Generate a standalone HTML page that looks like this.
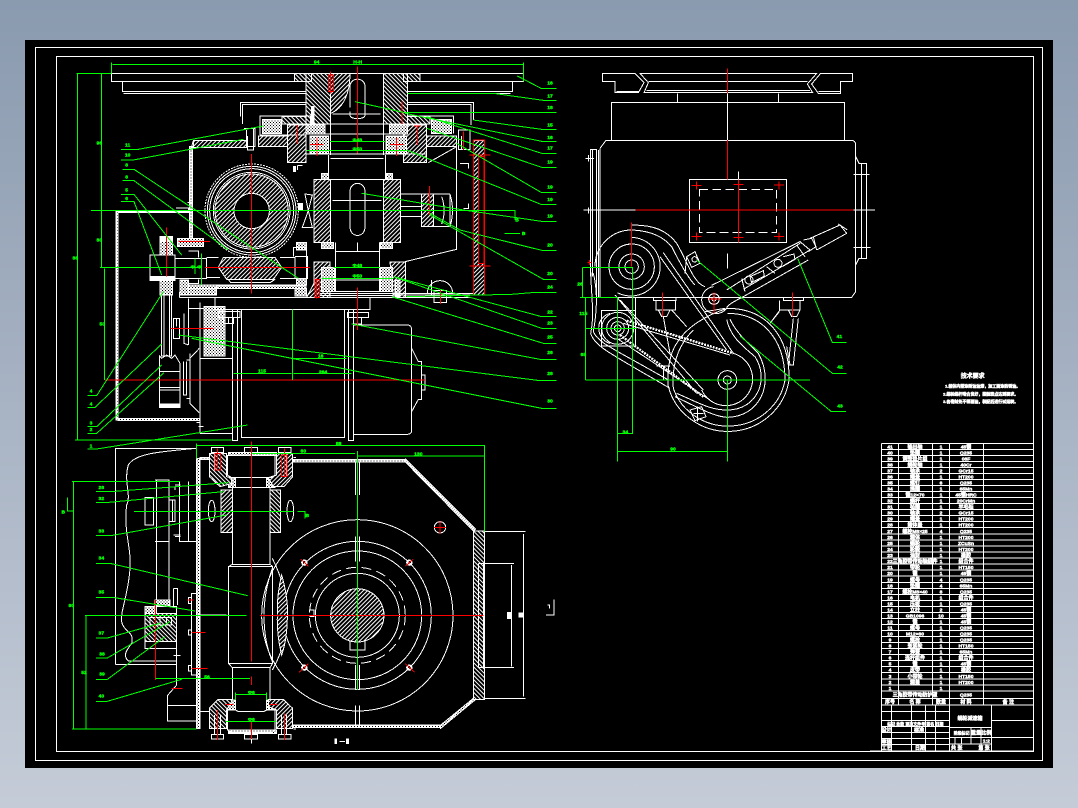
<!DOCTYPE html>
<html><head><meta charset="utf-8"><title>CAD drawing</title>
<style>
html,body{margin:0;padding:0;width:1078px;height:808px;overflow:hidden;background:linear-gradient(#8a9aaf,#c5ccd8)}
#k{position:absolute;left:25px;top:40px;width:1028px;height:728px;background:#000}
svg{position:absolute;left:0;top:0}
text{font-family:"Liberation Sans","Noto Sans CJK SC",sans-serif;font-weight:bold;stroke:none;text-anchor:middle}
.g text,text.g{fill:#0f0;stroke:#0f0;stroke-width:1.2px;font-size:15px}
.t text{fill:#fff;stroke:#fff;stroke-width:1.4px;font-size:15px}
</style></head><body><div id="k"></div>
<svg width="1078" height="808" viewBox="0 0 1078 808" fill="none" shape-rendering="crispEdges">
<defs>
<pattern id="h" width="9" height="9" patternUnits="userSpaceOnUse" patternTransform="rotate(45)"><rect width="9" height="9" fill="#000"/><rect width="9" height="3.4" fill="#fff"/></pattern>
<pattern id="b" width="9" height="9" patternUnits="userSpaceOnUse" patternTransform="rotate(-45)"><rect width="9" height="9" fill="#000"/><rect width="9" height="3.4" fill="#fff"/></pattern>
<pattern id="x" width="9" height="9" patternUnits="userSpaceOnUse"><rect width="9" height="9" fill="#fff"/><rect width="3" height="3" fill="#000"/><rect x="4.5" y="4.5" width="3" height="3" fill="#000"/></pattern>
</defs>
<path d="M35.5 47.5H1042.5V760.5H35.5Z M56.5 56.5H1033.5V751.5H56.5Z" stroke="#fff"/>

<!-- VIEW 1 -->
<g transform="translate(60 50) scale(.33333)" stroke-width="3">
<g stroke="#fff">
<path fill="url(#h)" d="M703 70H755V95H703Z M738 70H812V222H738Z M1030 70H1080V95H1030Z M970 70H1042V222H970Z M666 200H738V222H666Z M1042 200H1110V222H1042Z"/>
<path fill="url(#b)" d="M812 70H870C870 130 850 175 812 190Z M683 225H738V338H683Z M1042 225H1100V338H1030V225Z M595 258H683V290H595Z M1100 258H1190V290H1100Z M400 272H560V292H400Z M762 388H812V578H762Z M970 388H1022V578H970Z M1240 272H1274V735H1240Z M762 636H810V742H740L762 700Z M990 636H1037V742H1000Z"/>
<path fill="url(#x)" d="M608 208H665V250H608Z M1115 208H1175V250H1115Z M738 225H795V252H738Z M988 225H1042V252H988Z M750 258H805V312H750Z M978 258H1040V312H978Z M785 652H825V725H785Z M960 652H998V725H960Z M432 770H495V918H432Z M388 290H398V565H388Z M168 483H174V1110H168Z M174 483H385V488H174Z M174 1105H420V1112H174Z M300 560H338V615H300Z M300 690H338V735H300Z M352 565H430V590H352Z M360 690H385V735H360Z M710 578H740V600H710Z M710 685H740V705H710Z M385 705H470V735H385Z M470 706H738V716H470Z M705 716H740V738H705Z M785 578H820V596H785Z M960 578H998V596H960Z M785 370H805V388H785Z M978 370H998V388H978Z M1005 690H1020V740H1005Z"/>
<path d="M154 70H1391V95H1042M738 95H154V70M187 95V125H738M190 130H738M1357 95V125H1042M1042 130H1352"/>
<path d="M812 222V315M970 222V315M738 222H1042M795 252H988M738 312H1100M812 325H970M806 315V388H976V315M812 388V578M970 388V578M818 452H965"/>
<path d="M870 172V110C870 80 915 80 915 110V195C915 210 870 210 870 195V185M818 192H962" />
<path d="M870 530V425C870 392 915 392 915 425V530C915 565 870 565 870 530Z"/>
<path d="M542 200V157H738M1042 157H1240V210M548 222V163H738M1042 163H1233V225M600 255V198H752V222M1180 250V198H1042M600 255H740"/>
<path d="M392 300L400 272M388 565H398M1100 290H1190V598L1035 635M1190 290L1105 338M1100 290L1180 290"/>
<path d="M552 235H585V290H560V240M1195 240H1230V298H1195Z M580 235V300H562V258M1205 258V298"/>
<circle cx="575" cy="482" r="140" stroke-dasharray="6 3"/><circle cx="575" cy="482" r="133"/><circle cx="575" cy="482" r="126"/>
<path fill="url(#b)" fill-rule="evenodd" d="M575 372A110 110 0 1 1 574.9 372Z M575 430A53 53 0 1 0 575.1 430Z"/>
<circle cx="575" cy="482" r="115"/>
<path fill="url(#b)" d="M475 652L490 622H645L665 652L640 688H500Z"/>
<path d="M345 625H440V685H345M385 603H415V622M385 688V700H415V688M440 622H475M440 683H480M660 622H705V685H660M705 620H742V685H705M505 688L512 698H630L645 688"/>
<path d="M700 620V592H740V700"/>
<path d="M270 615H345V692H270ZM300 560H338V615M300 692V735H338V692M305 735V918H335V735M312 735V918M328 735V918"/>
<path d="M298 918L305 925 320 915 335 925 345 915 360 940V1072H298Z M298 965H360M298 1012H360M298 1020H360M370 935V1035H380V935M380 930H390V1045H380M390 910V1060L418 1088M390 925L418 895"/>
<path d="M340 805H358V865H340ZM350 805V830M372 790V880L385 885M385 745V885M385 775H432M420 758V1150M420 925H517M420 1150H517M465 742H930V778H465ZM358 742H1235M380 705H740M358 735H385M358 726V742M380 716H470"/>
<path d="M517 778V1172H533V778M545 778V1162H853V778M865 778V1172H880V778M475 785H540V802H475ZM490 802V820H520V802M505 802V820M862 788H925V803H862ZM880 803V822H905V803"/>
<path d="M880 825H1042Q1055 825 1055 840V1140Q1055 1153 1042 1153H880M1055 895L1075 935H1085V1048H1075L1055 1085M1085 975H1095V1020H1085"/>
<path d="M778 730H1240M780 736H1000M826 578V725H958V578M826 605H958M826 690H958M795 578V590M892 578V605"/>
<path d="M1115 690V740M1102 730A38 38 0 0 1 1178 730M1122 722H1160V758H1122Z"/>
<path d="M1020 432H1170M1020 500H1090M1090 432V530H1170V432M1170 432Q1185 482 1170 530M1020 470H1100M1145 440Q1160 482 1145 522"/>
<path d="M735 432L757 435 745 482 757 532 727 532 745 482ZM717 468H725V478H717Z"/>
<path d="M348 474H385V482M382 458H398V478"/>
<path d="M700 352V364M712 346H728M712 346V360M1200 340H1225V355M1225 460V476H1210"/>
<path d="M1240 735H1000M410 1118H420M415 1130H430"/>
</g>
<path fill="url(#b)" d="M1085 432H1120V530H1085Z" stroke="#fff"/>
<path stroke="#fff" fill="#fff" d="M300 560H338V575H300ZM270 680H345V692H270ZM298 1062H360V1072H298Z M755 170H762V222H755Z M715 460H728V482H715Z M700 350H706V364H700Z"/>
<g stroke="#f00">
<path d="M892 50V310M892 712V840M575 312V730M320 532V680M1108 408V495M1026 155V222M812 65V130M712 225V282M1228 315H1292M1228 648H1292M1210 245V300M1141 720V762M770 685V745"/>
<path d="M805 75H820V125H805ZM1240 270H1274V735H1240Z"/>
<path fill="#000" d="M1255 320H1272V640H1255Z"/>
<path d="M750 284H790M771 262V318M990 284H1030M1010 262V318M1062 228H1082M1072 228V285M355 575H450M435 652H750M135 990H1095M332 835H460M765 688H778V742H765Z"/>
</g>
<g stroke="#0f0">
<path d="M158 43H1391M154 37V70M1391 37V95M50 70H153M52 70V1170M45 1170H515M125 70V652M120 652H420M133 655V990M405 625V672M425 610V705"/>
<path d="M697 778V990M520 970H695M700 970H875M700 925H860M810 275H975M740 302H1040M820 652H960M785 685H1000M93 482H1365V510M1333 550H1380"/>
<path d="M1372 78L1445 116H1490M1042 130H1300L1450 151H1490M885 155L1030 187H1490M1240 210L1445 238H1490M1035 190L1445 274H1490M1100 200L1445 310H1490M1100 235L1445 352H1490M1190 280L1445 428H1490M1040 300L1445 464H1490M905 430L1210 480 1445 514H1490M1110 490L1200 540 1445 601H1490M1110 495L1450 688H1490M1040 740L1355 733 1415 728H1490M1000 680L1445 800H1490M1000 680L1445 835H1490M995 740L1450 880H1490M875 822L1440 928H1490M355 855L1440 992H1490M395 865L1445 1075H1490"/>
<path d="M183 298H235L610 228M183 330H220L550 268M187 358H222L715 685M187 392H222L505 600M183 433H222L365 615M183 455H222L305 675M82 1037H110L310 725M82 1072H105L305 882M82 1130H110L305 945M82 1150H110L312 968M82 1197H110L563 1125"/>
</g>
<g class="g">
<text x="770" y="41">94</text><text x="893" y="41">H-H</text><text x="118" y="284">96</text><text x="118" y="574">80</text><text x="46" y="628">86</text><text x="127" y="826">50</text><text x="892" y="275">Φ48</text><text x="892" y="301">Φ50</text><text x="892" y="651">Φ48</text><text x="892" y="682">Φ50</text><text x="606" y="968">115</text><text x="789" y="971">264</text><text x="782" y="923">18</text><text x="398" y="656">Φ</text><text x="418" y="656">Φ</text>
<text x="1470" y="103">16</text><text x="1470" y="142">17</text><text x="1470" y="177">18</text><text x="1470" y="229">15</text><text x="1470" y="267">16</text><text x="1470" y="298">17</text><text x="1470" y="340">19</text><text x="1470" y="415">19</text><text x="1470" y="453">19</text><text x="1470" y="502">19</text><text x="1470" y="589">20</text><text x="1470" y="675">20</text><text x="1470" y="715">24</text><text x="1470" y="790">22</text><text x="1470" y="823">23</text><text x="1470" y="865">25</text><text x="1470" y="912">26</text><text x="1470" y="975">28</text><text x="1470" y="1057">30</text>
<text x="203" y="290">11</text><text x="203" y="319">10</text><text x="200" y="350">8</text><text x="200" y="385">8</text><text x="200" y="425">5</text><text x="200" y="450">6</text><text x="93" y="1027">4</text><text x="93" y="1067">4</text><text x="93" y="1123">3</text><text x="93" y="1143">2</text><text x="93" y="1192">1</text><text x="1391" y="555">B</text><text x="1371" y="514">B</text>
</g>
</g>

<!-- VIEW 2 -->
<g transform="translate(60 435) scale(.33333)" stroke-width="3">
<g stroke="#fff">
<path d="M167 688V40H408M167 688H350M225 688H245M408 40C300 50 225 55 205 90C190 140 215 180 200 210 190 290 215 340 210 400 205 480 180 530 185 560 190 590 225 590 215 625 205 640 185 660 205 678H350V515"/>
<path d="M255 187H280V270H255ZM285 135H327V515M285 320H327M290 135V515M327 195H345V260H327M337 195V260M358 140V320H410M385 140V320M345 150H362M345 305H362"/>
<path fill="url(#x)" d="M285 495H330V515H285Z M255 515H290V535H255Z"/>
<path fill="url(#h)" d="M255 535H350V620H255Z"/>
<path d="M255 515H350V640H255ZM270 548H335V570H270ZM300 548V570M320 548V570M255 640H350M340 460V515M340 460H352V510M350 640V750L322 782V858H410M322 812H410"/>
<path d="M395 475H410V720H395ZM385 488H395V505H385ZM385 585H395V600H385ZM385 692H395V708H385ZM420 540H500M420 830H447M420 880V830"/>
<path fill="url(#x)" d="M410 70H420V880H410Z M420 68H448V74H420Z M1240 288L1033 78 1037 72 1246 282Z M1140 872L1240 790 1245 795 1142 880Z M700 73H1035V81H700Z M700 870H1140V878H700Z M505 128H527V158H505Z M620 128H645V158H620Z M500 795H527V825H500Z M620 795H648V825H620Z M505 52H650V62H505Z M505 885H650V895H505Z"/>
<path fill="url(#h)" d="M448 55H500V125L515 128V145L480 155 448 125Z M630 165H662V292H630Z M1240 288H1273V793H1240Z M448 820L475 793H515V800L500 825V880H448Z"/>
<path fill="url(#b)" d="M650 55H698V125L672 155H640L625 128 650 120Z M483 165H517V292H483Z M625 793H670L698 820V880H650V825L625 815Z"/>
<path d="M502 60V120L515 128H635L645 120V60M527 128V158H620V128M505 158H640M517 158V388L505 395V685L517 698V793M630 158V388L638 395V685L630 698V793M517 388H630M505 395H638M505 685H638M517 698H630M527 793V825L535 830H610L620 825V793M503 825V885L515 893H635L645 885V825"/>
<path d="M454 37H490V52H454ZM553 37H593V52H553ZM655 37H693V52H655ZM454 898H490V912H454ZM553 898H593V912H553ZM655 898H693V912H655ZM464 52V105H482V52M664 52V125H680V52M464 840V898H482V840M664 840V898H680V840"/>
<ellipse cx="455" cy="228" rx="10" ry="32"/><ellipse cx="691" cy="228" rx="10" ry="32"/>
<path d="M700 68H708M700 882H708M886 80V180M898 80V180M886 305V380M898 305V380M886 690V765M898 690V765M886 812V872M898 812V872M1273 290H1397M1273 790H1397M1390 297V785M1255 385H1362M1255 697H1362M1355 390V695M1255 385V697M1270 385V697"/>
<circle cx="892" cy="541" r="287"/><circle cx="892" cy="541" r="222"/><circle cx="892" cy="541" r="193"/>
<circle cx="892" cy="541" r="144" stroke-dasharray="30 16"/><circle cx="892" cy="541" r="126"/>
<path d="M637 400Q612 470 612 541Q612 620 637 680M637 370Q682 460 682 541 682 625 637 705"/>
<path fill="url(#b)" d="M665 420Q685 490 682 541 682 610 665 660 650 600 652 541 650 480 665 420Z"/>
<path d="M560 541H805M980 541H1240" stroke="#000" stroke-width="6" stroke-dasharray="28 14"/>
<path fill="url(#b)" fill-rule="evenodd" stroke="#fff" d="M892 461A80 80 0 1 1 891.9 461Z"/>
<path d="M870 618V645H915V618M750 525H762V545H748"/>
<g stroke-width="5"><circle cx="733" cy="383" r="7"/><circle cx="1048" cy="383" r="7"/><circle cx="733" cy="698" r="7"/><circle cx="1048" cy="698" r="7"/></g><circle cx="1140" cy="277" r="17"/>
<path fill="#fff" d="M825 912H830V925H825ZM860 912H866V925H860Z"/><path d="M838 919H855"/>
<path d="M1458 540H1482V493M1462 510H1468V520"/>
<path d="M340 662H362M340 300H362M345 155V165M575 912V925" />
<path fill="#fff" d="M1342 532H1354V550H1342ZM1377 534H1390V546H1377Z"/>
</g>
<g stroke="#f00">
<path d="M575 20V680M575 725V750M575 860V912M287 495V735M473 40V100M673 40V125M473 825V915M673 835V915M600 541H1270M1122 277H1158M1140 258V296M722 372L745 394M1060 372L1036 394M745 686L718 712M1036 686L1064 712M382 495H400M395 592H437M395 700H442M335 760H368M495 808H520M628 808H652"/>
<path d="M465 55H482V105H465ZM665 60H681V125H665Z"/>
</g>
<g stroke="#0f0">
<path d="M40 140V882M36 882H410M36 140H360M78 541V882M75 541H560M410 25V70M410 32H1273V290M575 55H885M892 63H1273M892 48V765M222 229H700M712 229H735V250M40 228H22V188M287 730H570M527 772V795M620 772V795M527 778H620M497 860H650"/>
<path d="M108 170H152L505 143M108 203H135L490 170M108 301H158L500 240M108 385H150L563 482M108 487H158L405 528M108 609H142L300 565M108 669H142L330 560M108 733H142L315 605M108 799H142L365 733"/>
</g>
<g class="g">
<text x="836" y="30">88</text><text x="730" y="53">60</text><text x="1075" y="62">130</text><text x="124" y="162">26</text><text x="124" y="195">32</text><text x="124" y="293">33</text><text x="124" y="373">34</text><text x="124" y="475">35</text><text x="124" y="598">37</text><text x="126" y="661">38</text><text x="126" y="721">39</text><text x="124" y="787">40</text><text x="34" y="516">90</text><text x="72" y="717">52</text><text x="441" y="730">56</text><text x="574" y="777">Φ6</text><text x="574" y="858">Φ6</text><text x="742" y="246">B</text><text x="10" y="235">B</text>
</g>
</g>

<!-- VIEW 3 -->
<g transform="translate(570 60) scale(.33333)" stroke-width="3">
<g stroke="#fff">
<path d="M97 40H195L222 68 205 98H135V65H97ZM210 40H740L712 72 728 98H222L235 68ZM752 40H848V65H812V100H745L725 72ZM235 65H712M140 94H205M745 94H810M230 92H720"/>
<path d="M124 240V127H823V240M322 100V127M625 100V127M472 100V240M90 265L108 241H843Q857 241 857 255V695L845 712H108M90 265V712"/>
<path d="M61 650V268H80V712M68 268V650M85 270V712M857 290L867 310H890V595H867L857 615M875 310V595M46 295H72M40 450H197M850 450H915M850 343H898M850 563H902M890 333V352M890 443V460M890 553V572M56 285V305M56 442V460"/>
<path d="M358 358H650V548H358Z"/>
<path stroke-dasharray="26 13" d="M388 388H620V518H388Z"/>
<path d="M505 335V358M472 580V625"/>
<circle cx="185" cy="620" r="20"/><circle cx="185" cy="620" r="38"/><circle cx="185" cy="620" r="68"/><path d="M185 532A88 88 0 1 1 142 698M185 510A110 110 0 0 0 75 620M185 495C250 495 290 510 320 550 350 600 370 670 405 680"/>
<path d="M185 510C240 512 280 530 305 560 335 620 360 660 375 675M62 620C62 700 75 760 62 820 75 860 120 880 300 985M70 640C85 700 80 760 70 815 85 850 130 865 295 960"/>
<path d="M350 590L375 575 390 610 365 622ZM345 640L350 590"/>
<circle cx="374" cy="598" r="8"/>
<path d="M270 590L470 870M280 578L490 880M150 720L400 990M135 705L380 1000M197 712V765"/>
<path d="M95 752H197V858H95ZM120 760C70 775 80 840 120 850"/>
<circle cx="143" cy="805" r="10"/><circle cx="143" cy="805" r="20"/><circle cx="143" cy="805" r="33"/><circle cx="143" cy="805" r="48"/>
<circle cx="472" cy="960" r="12"/><circle cx="472" cy="960" r="28"/><path d="M490 880A80 80 0 1 1 395 990"/>
<path d="M470 778C480 830 520 860 555 890 600 960 560 1050 472 1050 420 1050 390 1030 320 1000"/>
<path d="M480 778C500 820 535 850 565 880 615 970 570 1070 472 1072 430 1070 380 1040 315 1010"/>
<path d="M472 745C590 745 660 830 657 960A185 180 0 0 1 295 980C290 930 300 880 320 850 350 800 410 765 472 745"/>
<path d="M472 760C570 760 645 830 645 960A173 165 0 0 1 310 985C305 920 320 860 370 810M405 755L465 745"/>
<path d="M670 775L655 915H670L685 775M600 790L630 750H628M660 915L650 860"/>
<path d="M250 712V722H318V712M258 722V750H316V722M265 750L275 770H290L300 750M640 712V722H700V712M628 722V750H690V722M655 750L665 770H680L690 750M305 750L350 800M628 755L600 790M280 770L300 880M280 918V960M260 918H300"/>
<path d="M360 1050L395 1040 408 1070 375 1082ZM370 1060H400M382 1040V1085"/>
<path d="M430 680A40 40 0 0 0 395 720 42 42 0 0 0 470 745C470 735 500 720 520 710L715 600M425 676L690 545 720 570 520 688M470 690L690 550M515 655L525 695M590 620L615 640M680 555L705 590M700 540L725 535 738 560 715 575"/>
<path d="M540 650L580 632 583 648 545 668ZM640 590L672 582 675 598 640 618M720 535L810 495 830 520 740 570M730 530L740 570M805 492L832 510"/>
<circle cx="537" cy="660" r="12"/><circle cx="624" cy="610" r="12"/><circle cx="432" cy="717" r="16"/><circle cx="432" cy="717" r="6"/>
</g>
<path d="M170 782L490 880M150 825L400 1010" stroke="#fff" stroke-width="7" stroke-dasharray="6 3"/>
<path d="M160 790L480 885M145 838L420 1020" stroke="#fff"/>
<g stroke="#f00">
<path d="M472 25V100M472 240V358M505 358V548M197 450H850M185 488V620M365 377H395M380 365V388M612 375H642M627 365V388M490 374H520M365 530H395M380 518V542M612 530H642M627 518V542M490 532H520M277 697V770M667 697V770M415 717H455M432 697V760M52 608H65M58 600V615"/>
</g>
<g stroke="#0f0">
<path d="M37 622H187V1120H143M37 622V712M30 712H143M47 712V960M47 805H200M47 960H720M143 712V1205M143 1175H472M472 960V1205"/>
<path d="M683 595L787 847H830M380 600L787 940H830M510 828L783 1054H828"/>
</g>
<g class="g">
<text x="30" y="677">26</text><text x="40" y="765">115</text><text x="40" y="888">65</text><text x="166" y="1120">34</text><text x="309" y="1172">90</text><text x="808" y="834">41</text><text x="810" y="925">42</text><text x="810" y="1042">43</text>
</g>
</g>

<!-- TABLE -->
<g transform="translate(870 370) scale(.33333)" stroke-width="3">
<path stroke="#fff" d="M35 220H490M35 238H490M35 256H490M35 274H490M35 292H490M35 310H490M35 328H490M35 347H490M35 365H490M35 383H490M35 401H490M35 419H490M35 437H490M35 455H490M35 473H490M35 492H490M35 510H490M35 528H490M35 546H490M35 564H490M35 582H490M35 600H490M35 618H490M35 637H490M35 655H490M35 673H490M35 691H490M35 709H490M35 727H490M35 745H490M35 763H490M35 782H490M35 800H490M35 818H490M35 836H490M35 854H490M35 872H490M35 890H490M35 908H490M35 927H490M35 945H490M35 963H490M35 985H490M35 1005H490
M35 220V1143M85 220V1005M187 220V1005M238 220V1143M340 220V1005M490 0V1143
M35 1025H238M35 1052H238M35 1070H238M35 1088H238M35 1106H238M35 1124H238M0 1143H490M65 1005V1143M125 1005V1143M167 1005V1143M197 1005V1143
M238 1072H365M238 1103H365M238 1122H365M365 1005V1143M365 1052H490M365 1103H490M303 1072V1103M333 1072V1143M255 1103V1122M275 1103V1122M303 1103V1122"/>
<g class="t">
<text x="60" y="235">41</text><text x="135" y="235">输出轴</text><text x="213" y="235">1</text><text x="288" y="235">45钢</text>
<text x="60" y="253">40</text><text x="135" y="253">垫圈</text><text x="213" y="253">1</text><text x="288" y="253">Q235</text>
<text x="60" y="271">39</text><text x="135" y="271">调整垫片组</text><text x="213" y="271">1</text><text x="288" y="271">08F</text>
<text x="60" y="289">38</text><text x="135" y="289">蜗轮轴</text><text x="213" y="289">1</text><text x="288" y="289">40Cr</text>
<text x="60" y="307">37</text><text x="135" y="307">轴承</text><text x="213" y="307">2</text><text x="288" y="307">GCr15</text>
<text x="60" y="325">36</text><text x="135" y="325">端盖</text><text x="213" y="325">1</text><text x="288" y="325">HT200</text>
<text x="60" y="344">35</text><text x="135" y="344">螺钉</text><text x="213" y="344">6</text><text x="288" y="344">Q235</text>
<text x="60" y="362">34</text><text x="135" y="362">挡圈</text><text x="213" y="362">1</text><text x="288" y="362">65Mn</text>
<text x="60" y="380">33</text><text x="135" y="380">键12×70</text><text x="213" y="380">1</text><text x="288" y="380">45钢HRC</text>
<text x="60" y="398">32</text><text x="135" y="398">蜗杆</text><text x="213" y="398">1</text><text x="288" y="398">20CrMn</text>
<text x="60" y="416">31</text><text x="135" y="416">毡圈</text><text x="213" y="416">1</text><text x="288" y="416">羊毛毡</text>
<text x="60" y="434">30</text><text x="135" y="434">轴承</text><text x="213" y="434">2</text><text x="288" y="434">GCr15</text>
<text x="60" y="452">29</text><text x="135" y="452">端盖</text><text x="213" y="452">1</text><text x="288" y="452">HT200</text>
<text x="60" y="470">28</text><text x="135" y="470">箱体盖</text><text x="213" y="470">1</text><text x="288" y="470">HT200</text>
<text x="60" y="489">27</text><text x="135" y="489">螺栓M8×25</text><text x="213" y="489">4</text><text x="288" y="489">Q235</text>
<text x="60" y="507">26</text><text x="135" y="507">箱体</text><text x="213" y="507">1</text><text x="288" y="507">HT200</text>
<text x="60" y="525">25</text><text x="135" y="525">蜗轮</text><text x="213" y="525">1</text><text x="288" y="525">ZCuSn</text>
<text x="60" y="543">24</text><text x="135" y="543">轮毂</text><text x="213" y="543">1</text><text x="288" y="543">HT200</text>
<text x="60" y="561">23</text><text x="135" y="561">油封</text><text x="213" y="561">1</text><text x="288" y="561">橡胶</text>
<text x="60" y="579">22</text><text x="135" y="579">三角胶带传动轴组件</text><text x="213" y="579">1</text><text x="288" y="579">组合件</text>
<text x="60" y="597">21</text><text x="135" y="597">带轮</text><text x="213" y="597">1</text><text x="288" y="597">HT150</text>
<text x="60" y="615">20</text><text x="135" y="615">键</text><text x="213" y="615">1</text><text x="288" y="615">45钢</text>
<text x="60" y="634">19</text><text x="135" y="634">螺母</text><text x="213" y="634">4</text><text x="288" y="634">Q235</text>
<text x="60" y="652">18</text><text x="135" y="652">垫圈</text><text x="213" y="652">4</text><text x="288" y="652">65Mn</text>
<text x="60" y="670">17</text><text x="135" y="670">螺栓M8×40</text><text x="213" y="670">8</text><text x="288" y="670">Q235</text>
<text x="60" y="688">16</text><text x="135" y="688">电机</text><text x="213" y="688">1</text><text x="288" y="688">组合件</text>
<text x="60" y="706">15</text><text x="135" y="706">压板</text><text x="213" y="706">1</text><text x="288" y="706">Q235</text>
<text x="60" y="724">14</text><text x="135" y="724">立柱</text><text x="213" y="724">2</text><text x="288" y="724">45钢</text>
<text x="60" y="742">13</text><text x="135" y="742">GB1096</text><text x="213" y="742">10</text><text x="288" y="742">45钢</text>
<text x="60" y="760">12</text><text x="135" y="760">键</text><text x="213" y="760">1</text><text x="288" y="760">45钢</text>
<text x="60" y="779">11</text><text x="135" y="779">螺母</text><text x="213" y="779">1</text><text x="288" y="779">Q235</text>
<text x="60" y="797">10</text><text x="135" y="797">M12×60</text><text x="213" y="797">1</text><text x="288" y="797">Q235</text>
<text x="60" y="815">9</text><text x="135" y="815">螺栓</text><text x="213" y="815">1</text><text x="288" y="815">Q235</text>
<text x="60" y="833">8</text><text x="135" y="833">张紧轮</text><text x="213" y="833">1</text><text x="288" y="833">HT150</text>
<text x="60" y="851">7</text><text x="135" y="851">弹簧</text><text x="213" y="851">1</text><text x="288" y="851">65Mn</text>
<text x="60" y="869">6</text><text x="135" y="869">连杆组件</text><text x="213" y="869">1</text><text x="288" y="869">组合件</text>
<text x="60" y="887">5</text><text x="135" y="887">键</text><text x="213" y="887">1</text><text x="288" y="887">45钢</text>
<text x="60" y="905">4</text><text x="135" y="905">皮带</text><text x="213" y="905">1</text><text x="288" y="905">橡胶</text>
<text x="60" y="924">3</text><text x="135" y="924">小带轮</text><text x="213" y="924">1</text><text x="288" y="924">HT150</text>
<text x="60" y="942">2</text><text x="135" y="942">箱盖</text><text x="213" y="942">1</text><text x="288" y="942">HT200</text>
<text x="60" y="960">1</text><text x="135" y="980">三角胶带传动防护罩</text><text x="213" y="960">1</text><text x="288" y="980">Q235</text>
<text x="60" y="1000">序号</text><text x="135" y="1000">名 称</text><text x="213" y="1000">数量</text><text x="288" y="1000">材 料</text><text x="415" y="1000">备 注</text>
<text x="136" y="1066" style="font-size:12px">标记 处数 更改文件号 签名 日期</text>
<text x="50" y="1085">设计</text><text x="147" y="1085">标准</text><text x="50" y="1120">审核</text><text x="50" y="1139">工艺</text><text x="150" y="1139">日期</text>
<text x="300" y="1050" style="font-size:15px">蜗轮减速箱</text>
<text x="275" y="1094" style="font-size:12px">阶段标记</text><text x="318" y="1094">重量</text><text x="349" y="1094">比例</text><text x="349" y="1118">1:2</text><text x="260" y="1138">共 张</text><text x="342" y="1138">第 张</text>
<text x="308" y="24" style="font-size:18px">技术要求</text>
<text x="338" y="53" style="font-size:12px">1.箱体内壁涂耐油油漆，加工面涂防锈油。</text>
<text x="332" y="76" style="font-size:12px">2.蜗轮蜗杆啮合良好，接触斑点达到要求。</text>
<text x="332" y="99" style="font-size:12px">3.各密封处不得漏油，装配后进行试运转。</text>
</g>
</g>
</svg>
</body></html>
